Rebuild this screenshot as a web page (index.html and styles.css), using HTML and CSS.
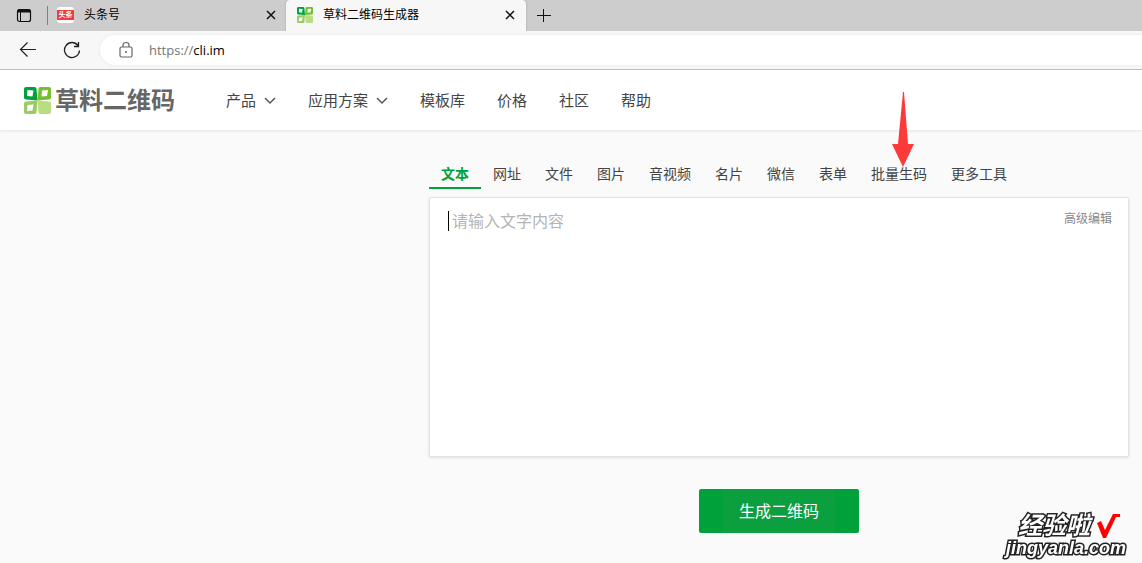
FILE: index.html
```html
<!DOCTYPE html>
<html lang="zh-CN">
<head>
<meta charset="utf-8">
<title>草料二维码生成器</title>
<link rel="stylesheet" href="styles.css">
</head>
<body>
<svg class="defs" width="0" height="0" aria-hidden="true">
  <symbol id="clover" viewBox="0 0 27 27">
    <path fill="#00a03a" fill-rule="evenodd" d="M2 0H10.500Q12.500 0 12.500 2L13.500 13.500L2 12.500Q0 12.500 0 10.500V2Q0 0 2 0ZM3.500 3L3 9L8.500 9.500L9.500 3.500Z"/>
    <path fill="#77be2f" fill-rule="evenodd" d="M16.500 0H25Q27 0 27 2V10.500Q27 12.500 25 12.500L13.500 13.500L14.500 2Q14.500 0 16.500 0ZM18 3.500L17.500 9.500L23 9L24 3Z"/>
    <path fill="#9bcb62" fill-rule="evenodd" d="M2 14.500L13.500 13.500L12.500 25Q12.500 27 10.500 27H2Q0 27 0 25V16.500Q0 14.500 2 14.500ZM3.500 18L3 24L8.500 23.500L9.500 17.500Z"/>
    <path fill="#b9dd80" d="M13.500 13.500L25 14.500Q27 14.500 27 16.500V25Q27 27 25 27H16.500Q14.500 27 14.500 25Z"/>
  </symbol>
  <symbol id="cross" viewBox="0 0 10 10"><path d="M1 1L9 9M9 1L1 9" fill="none" stroke="#111" stroke-width="1.500"/></symbol>
  <symbol id="chevron" viewBox="0 0 12 8"><path d="M1 1L6 6L11 1" fill="none" stroke="#555" stroke-width="1.500"/></symbol>
</svg>

<div class="tabstrip">
  <button class="icon-button tab-actions" aria-label="标签页操作">
    <svg width="16" height="16" viewBox="0 0 16 16"><rect x="1.500" y="1.500" width="13" height="12" rx="2" fill="none" stroke="#111" stroke-width="1.200"/><path d="M1.500 4.500V3Q1.500 1 3.500 1H12.500Q14.500 1 14.500 3V4.500Z" fill="#111"/><path d="M4.500 4V13" stroke="#111"/></svg>
  </button>
  <div class="browser-tab first">
    <span class="toutiao">头条</span>
    <span class="tab-title">头条号</span>
    <button class="icon-button" aria-label="关闭 头条号"><svg width="10" height="10"><use href="#cross"/></svg></button>
  </div>
  <div class="browser-tab current">
    <svg width="16" height="16"><use href="#clover"/></svg>
    <span class="tab-title">草料二维码生成器</span>
    <button class="icon-button" aria-label="关闭 草料二维码生成器"><svg width="10" height="10"><use href="#cross"/></svg></button>
  </div>
  <button class="icon-button new-tab" aria-label="新建标签页"><svg width="14" height="14" viewBox="0 0 14 14"><path d="M6.500 0V13M0 6.500H14" stroke="#111"/></svg></button>
</div>

<div class="toolbar">
  <button class="icon-button" aria-label="后退"><svg width="18" height="18" viewBox="0 0 18 18"><path d="M17 8.500H1.500M8.500 1.500L1.500 8.500L8.500 15.500" fill="none" stroke="#222" stroke-width="1.200"/></svg></button>
  <button class="icon-button" aria-label="刷新"><svg width="18" height="18" viewBox="0 0 18 18"><path d="M15 4.500A7.500 7.500 0 1 0 16.500 9.500M15.500 1V5.500H11" fill="none" stroke="#222" stroke-width="1.300"/></svg></button>
  <div class="address" role="group" aria-label="地址栏">
    <svg width="14" height="18" viewBox="0 0 14 18"><rect x="1" y="6" width="12" height="10" rx="1.500" fill="none" stroke="#666" stroke-width="1.200"/><path d="M4 6V4Q4 1.500 7 1.500Q10 1.500 10 4V6" fill="none" stroke="#666" stroke-width="1.200"/><circle cx="7" cy="11" r="1" fill="#666"/></svg>
    <span class="url"><span class="scheme">https://</span>cli.im</span>
  </div>
</div>

<header class="site-header">
  <a class="brand" href="#"><svg width="27" height="27"><use href="#clover"/></svg><span>草料二维码</span></a>
  <nav class="site-nav">
    <a href="#">产品<svg width="12" height="8"><use href="#chevron"/></svg></a>
    <a href="#">应用方案<svg width="12" height="8"><use href="#chevron"/></svg></a>
    <a href="#">模板库</a>
    <a href="#">价格</a>
    <a href="#">社区</a>
    <a href="#">帮助</a>
  </nav>
</header>

<main class="maker">
  <nav class="types">
    <a class="selected" href="#">文本</a>
    <a href="#">网址</a>
    <a href="#">文件</a>
    <a href="#">图片</a>
    <a href="#">音视频</a>
    <a href="#">名片</a>
    <a href="#">微信</a>
    <a href="#">表单</a>
    <a class="batch" href="#">批量生码<svg class="pointer" width="22" height="75" viewBox="0 0 22 75"><path d="M11 0H12L16 52H22L11 75L0 52H6Z" fill="#fc3a3a"/></svg></a>
    <a href="#">更多工具</a>
  </nav>
  <div class="editor">
    <span class="caret"></span>
    <textarea aria-label="文字内容" placeholder="请输入文字内容"></textarea>
    <a class="advanced" href="#">高级编辑</a>
  </div>
  <button class="generate">生成二维码</button>
</main>

<div class="watermark">
  <div class="mark-name"><span>经验啦</span><svg width="24" height="24" viewBox="0 0 24 24"><path d="M1 9L5 7L9 16L17 0H24V3H20L10 24H7Z" fill="#f00"/></svg></div>
  <div class="mark-site">jingyanla.com</div>
</div>
</body>
</html>
```
FILE: styles.css
```css
* { box-sizing: border-box; }
body {
  margin: 0;
  background: #fafafa;
  color: #444;
  font-family: "Liberation Sans", "Noto Sans CJK SC", sans-serif;
  font-size: 14px;
}
a { color: inherit; text-decoration: none; }
button { font: inherit; }
svg { display: block; flex: none; }
.defs { position: absolute; }
.icon-button {
  display: flex;
  flex: none;
  padding: 0;
  border: 0;
  background: none;
}

.tabstrip {
  display: flex;
  align-items: center;
  height: 31px;
  background: #cdcdcd;
  color: #000;
  font-size: 12px;
}
.tab-actions { margin-left: 16px; }
.browser-tab {
  display: flex;
  align-items: center;
  gap: 10px;
  width: 240px;
  height: 31px;
  padding: 0 11px 1px;
}
.browser-tab.first {
  position: relative;
  width: 239px;
  margin-left: 15px;
  padding: 0 10px 1px;
}
.browser-tab.first::before {
  content: "";
  position: absolute;
  left: 0;
  top: 6px;
  width: 1px;
  height: 19px;
  background: #808080;
}
.browser-tab.current {
  background: #f7f7f7;
  border-radius: 4px 4px 0 0;
  box-shadow: 0 0 2px #999;
  clip-path: inset(0 -3px 0 -3px);
}
.toutiao {
  width: 17px;
  height: 16px;
  border: solid #fff;
  border-width: 3px 0;
  border-radius: 3px;
  background: #f5383b;
  color: #fff;
  font-size: 7px;
  font-weight: 700;
  line-height: 10px;
  text-align: center;
}
.tab-title { flex: 1; line-height: 18px; }
.new-tab { margin-left: 11px; }

.toolbar {
  display: flex;
  align-items: center;
  height: 39px;
  padding-left: 19px;
  background: #f7f7f7;
  border-bottom: 1px solid #b9b9b9;
}
.toolbar .icon-button { margin-right: 26px; }
.toolbar .icon-button + .icon-button { margin-right: 19px; }
.address {
  display: flex;
  flex: 1;
  align-items: center;
  gap: 16px;
  height: 30px;
  padding-left: 19px;
  border-radius: 15px 0 0 15px;
  background: #fff;
  box-shadow: 0 0 3px #e4e4e4;
}
.url { color: #000; font-family: "Open Sans", sans-serif; font-size: 13px; line-height: 18px; }
.scheme { color: #767676; }

.site-header {
  display: flex;
  align-items: center;
  gap: 51px;
  height: 60px;
  padding-left: 24px;
  background: #fff;
  box-shadow: 0 1px 3px #e4e4e4;
}
.brand {
  display: flex;
  align-items: center;
  gap: 4px;
  color: #666;
  font-size: 24px;
  font-weight: 700;
  line-height: 36px;
}
.brand span { padding-top: 2px; }
.site-nav { display: flex; gap: 32px; padding-top: 2px; font-size: 15px; line-height: 24px; }
.site-nav a { display: flex; align-items: center; gap: 8px; }

.maker {
  display: flex;
  flex-direction: column;
  padding: 30px 13px 30px 429px;
}
.types { display: flex; line-height: 26px; }
.types a {
  padding: 1px 12px 0;
  border-bottom: 2px solid transparent;
  white-space: nowrap;
}
.types .selected { color: #00a03a; border-color: #00a03a; font-weight: 700; }
.batch { position: relative; }
.pointer { position: absolute; left: 33px; bottom: 20px; }
.editor {
  position: relative;
  display: flex;
  align-items: flex-start;
  margin-top: 8px;
  border: 1px solid #e2e2e2;
  border-radius: 2px;
  background: #fff;
  box-shadow: 0 1px 3px #e0e0e0;
}
.editor textarea {
  flex: 1;
  height: 258px;
  padding: 12px 8px 12px 22px;
  border: 0;
  outline: 0;
  resize: none;
  background: none;
  color: #333;
  font: inherit;
  font-size: 16px;
  line-height: 24px;
}
.editor textarea::placeholder { color: #b5b5b5; }
.caret {
  position: absolute;
  left: 18px;
  top: 13px;
  width: 1px;
  height: 20px;
  background: #000;
}
.advanced { margin: 12px 16px 0 0; color: #888; font-size: 12px; line-height: 18px; }
.generate {
  align-self: center;
  width: 160px;
  height: 44px;
  margin-top: 32px;
  padding: 0 0 2px;
  border: 0;
  border-radius: 2px;
  background: linear-gradient(90deg, #00a03a 24px, #0c9f40 24px, #0c9f40 136px, #00a03a 136px);
  color: #fff;
  font-size: 16px;
}

.watermark {
  position: fixed;
  right: 16px;
  bottom: 6px;
  color: #fff;
  font-weight: 700;
  font-style: italic;
  -webkit-text-stroke: 3px #222;
  paint-order: stroke fill;
}
.mark-name {
  display: flex;
  align-items: center;
  justify-content: flex-end;
  gap: 6px;
  padding-right: 6px;
  font-size: 24px;
  line-height: 26px;
}
.mark-site { font-size: 18px; line-height: 18px; }
```
